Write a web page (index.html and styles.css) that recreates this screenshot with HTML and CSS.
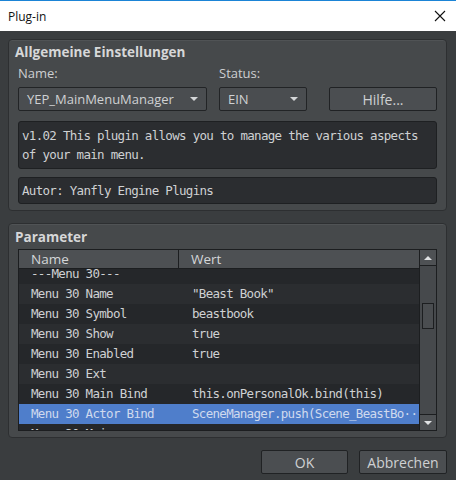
FILE: index.html
```html
<!DOCTYPE html>
<html lang="de">
<head>
    <meta charset="UTF-8">
    <title>Plug-in</title>
    <link rel="stylesheet" href="styles.css">
</head>
<body>
    <div class="titlebar">
        <span class="title">Plug-in</span>
        <svg class="close" width="12" height="12" viewBox="0 0 12 12">
            <path d="M1 1 L11 11 M11 1 L1 11" stroke="#111" stroke-width="1.1" fill="none"/>
        </svg>
    </div>

    <div class="dialog">
        <!-- general settings -->
        <div class="group">
            <div class="group-title">Allgemeine Einstellungen</div>
            <div class="settings">
                <label class="lbl">Name:</label>
                <label class="lbl">Status:</label>
                <span></span>
                <div class="combo">
                    <span>YEP_MainMenuManager</span>
                    <span class="arrow"></span>
                </div>
                <div class="combo">
                    <span>EIN</span>
                    <span class="arrow"></span>
                </div>
                <button class="btn">Hilfe...</button>
            </div>
            <div class="textbox desc">v1.02 This plugin allows you to manage the various aspects of your main menu.</div>
            <div class="textbox author">Autor: Yanfly Engine Plugins</div>
        </div>

        <!-- parameter list -->
        <div class="group group-params">
            <div class="group-title">Parameter</div>
            <div class="table">
                <div class="table-main">
                    <div class="thead">
                        <div class="th th-name">Name</div>
                        <div class="th">Wert</div>
                    </div>
                    <div class="tbody">
                        <div class="rows">
                            <div class="row"><span class="c1">---Menu 30---</span><span class="c2"></span></div>
                            <div class="row"><span class="c1">Menu 30 Name</span><span class="c2">"Beast Book"</span></div>
                            <div class="row"><span class="c1">Menu 30 Symbol</span><span class="c2">beastbook</span></div>
                            <div class="row"><span class="c1">Menu 30 Show</span><span class="c2">true</span></div>
                            <div class="row"><span class="c1">Menu 30 Enabled</span><span class="c2">true</span></div>
                            <div class="row"><span class="c1">Menu 30 Ext</span><span class="c2"></span></div>
                            <div class="row"><span class="c1">Menu 30 Main Bind</span><span class="c2">this.onPersonalOk.bind(this)</span></div>
                            <div class="row selected"><span class="c1">Menu 30 Actor Bind</span><span class="c2">SceneManager.push(Scene_BeastBo···</span></div>
                            <div class="row"><span class="c1">Menu 30 Main</span><span class="c2"></span></div>
                        </div>
                    </div>
                </div>
                <div class="scrollbar">
                    <div class="sb-btn"><span class="tri-up"></span></div>
                    <div class="sb-track"><div class="sb-thumb"></div></div>
                    <div class="sb-btn"><span class="tri-down"></span></div>
                </div>
            </div>
        </div>

        <div class="footer">
            <button class="btn btn-ok">OK</button>
            <button class="btn btn-cancel">Abbrechen</button>
        </div>
    </div>
</body>
</html>
```

FILE: styles.css
```css
* {
    box-sizing: border-box;
}

body {
    margin: 0;
    width: 456px;
    height: 480px;
    background-color: #3a3d3f;
    font-family: 'Open Sans', 'Noto Sans', sans-serif;
    color: #cfd1d3;
    overflow: hidden;
}

.titlebar {
    height: 31px;
    background: #fff;
    border-top: 1px solid #1b84d6;
    display: flex;
    align-items: center;
    justify-content: space-between;
    padding: 0 10px 0 8px;
}

.title {
    font-size: 12px;
    color: #111;
}

.dialog {
    padding: 8px 9px 0 8px;
}

.group {
    background-color: #46494b;
    border: 1px solid #2d2f31;
    border-radius: 4px;
    padding: 2px 9px 6px 9px;
    box-shadow: inset 0 1px 0 #505355;
}

.group-title {
    font-size: 13.5px;
    font-weight: 700;
    color: #d6d7d8;
    height: 20px;
    line-height: 20px;
    margin-left: -3px;
}

.settings {
    display: grid;
    grid-template-columns: 189px 88px 108px;
    column-gap: 12px;
    grid-template-rows: 22px 24px;
    margin-top: 3px;
}

.settings .btn {
    margin-left: 10px;
    width: 108px;
}

.lbl {
    font-size: 13px;
    color: #cdcfd1;
    line-height: 16px;
}

.combo {
    display: flex;
    align-items: center;
    justify-content: space-between;
    background-color: #4a4d50;
    border: 1px solid #222426;
    border-radius: 2px;
    padding: 0 8px 0 8px;
    font-size: 13px;
    color: #cfd1d3;
}

.arrow {
    width: 0;
    height: 0;
    border-left: 4px solid transparent;
    border-right: 4px solid transparent;
    border-top: 4px solid #d4d6d8;
}

.btn {
    background-color: #4b4e51;
    border: 1px solid #202224;
    border-radius: 2px;
    color: #cfd1d3;
    font-family: 'Open Sans', 'Noto Sans', sans-serif;
    font-size: 14px;
    padding: 0;
    cursor: pointer;
}

.textbox {
    background-color: #2b2d30;
    border: 1px solid #1e2022;
    border-radius: 3px;
    font-family: 'DejaVu Sans Mono', monospace;
    font-size: 12.5px;
    letter-spacing: -0.7px;
    color: #cfd1d3;
    padding: 0 10px 0 3px;
}

.desc {
    margin-top: 10px;
    height: 48px;
    line-height: 19px;
    padding-top: 4px;
}

.author {
    margin-top: 8px;
    height: 27px;
    line-height: 25px;
}

.group-params {
    margin-top: 12px;
    padding-top: 3px;
}

.table {
    display: flex;
    height: 182px;
    border: 1px solid #1c1e20;
    background-color: #242629;
    margin-top: 2px;
}

.table-main {
    flex: 1;
    display: flex;
    flex-direction: column;
    min-width: 0;
}

.thead {
    display: flex;
    height: 19px;
    background-color: #4d5053;
    border-bottom: 1px solid #1c1e20;
    font-size: 13.5px;
    color: #d4d6d8;
    line-height: 19px;
}

.th {
    padding-left: 12px;
    flex: 1;
}

.th-name {
    flex: 0 0 160px;
    border-right: 1px solid #1c1e20;
}

.tbody {
    flex: 1;
    overflow: hidden;
}

.rows {
    margin-top: -5px;
}

.row {
    display: flex;
    height: 20px;
    line-height: 20px;
    font-family: 'DejaVu Sans Mono', monospace;
    font-size: 12.5px;
    letter-spacing: -0.7px;
    color: #cfd1d3;
    background-color: #25272a;
    white-space: nowrap;
}

.row:nth-child(even) {
    background-color: #2b2d30;
}

.row.selected {
    background-color: #4f7ecb;
    color: #cfdaee;
}

.c1 {
    flex: 0 0 160px;
    padding-left: 12px;
}

.c2 {
    flex: 1;
    padding-left: 13px;
    overflow: hidden;
}

.scrollbar {
    width: 17px;
    display: flex;
    flex-direction: column;
    background-color: #46494c;
    border-left: 1px solid #1c1e20;
}

.sb-btn {
    height: 16px;
    display: flex;
    align-items: center;
    justify-content: center;
    background-color: #4e5154;
}

.sb-btn:first-child {
    border-bottom: 1px solid #1c1e20;
}

.sb-btn:last-child {
    border-top: 1px solid #1c1e20;
}

.tri-up,
.tri-down {
    width: 0;
    height: 0;
    border-left: 4px solid transparent;
    border-right: 4px solid transparent;
}

.tri-up {
    border-bottom: 4px solid #e0e2e4;
}

.tri-down {
    border-top: 4px solid #e0e2e4;
}

.sb-track {
    flex: 1;
    padding: 37px 2px 0 2px;
}

.sb-thumb {
    height: 26px;
    background-color: #4a4d50;
    border: 1px solid #1c1e20;
}

.footer {
    display: flex;
    justify-content: flex-end;
    gap: 11px;
    margin-top: 12px;
}

.footer .btn {
    height: 24px;
}

.btn-ok {
    width: 87px;
}

.btn-cancel {
    width: 88px;
}
```
